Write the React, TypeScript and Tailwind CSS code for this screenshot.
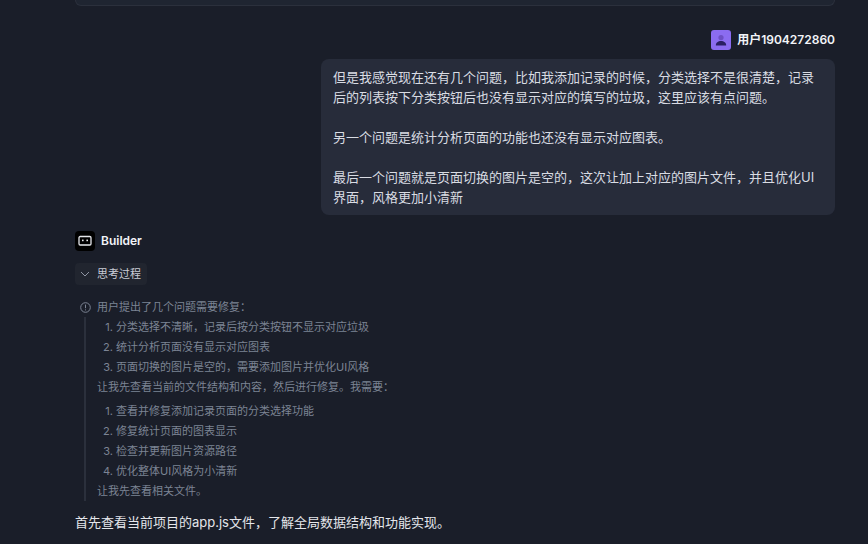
import React from "react";

const font = { };

function Row({ n, t }: { n: number; t: string }) {
  return (
    <div className="h-5 flex text-[11px] leading-5 text-[#7c8494] pl-[5px]">
      <span className="w-[11px] text-right mr-[0px]">{n}.</span>
      <span className="ml-[3px]">{t}</span>
    </div>
  );
}

export default function App() {
  return (
    <div className="w-[868px] h-[544px] overflow-hidden bg-[#1a1e29] font-['Inter','Noto_Sans_CJK_SC',sans-serif] flex flex-col pl-[75px] pr-[33px]">
      <div className="h-[6px] shrink-0 bg-[#1f2531] border border-t-0 border-[#2b303c] rounded-b-md" />
      <div className="mt-6 h-5 shrink-0 flex justify-end items-center gap-[6px]">
        <div className="w-5 h-5 rounded-[3px] bg-[#8b6cf0] flex items-center justify-center">
          <svg width="14" height="14" viewBox="0 0 14 14">
            <circle cx="7" cy="4.6" r="2.6" fill="#6d4fc4" />
            <path d="M1.8 12.5c0-3 2.3-4.6 5.2-4.6s5.2 1.6 5.2 4.6z" fill="#2a1f63" />
          </svg>
        </div>
        <span className="text-[12px] font-semibold text-[#f2f4f8] leading-5">用户1904272860</span>
      </div>
      <div className="mt-[9px] self-end w-[514px] h-[156px] shrink-0 rounded-lg bg-[#272c3a] px-3 pt-[8px] text-[13px] leading-5 text-[#d9dce3]">
        <p>但是我感觉现在还有几个问题，比如我添加记录的时候，分类选择不是很清楚，记录后的列表按下分类按钮后也没有显示对应的填写的垃圾，这里应该有点问题。</p>
        <p className="mt-5">另一个问题是统计分析页面的功能也还没有显示对应图表。</p>
        <p className="mt-5">最后一个问题就是页面切换的图片是空的，这次让加上对应的图片文件，并且优化UI界面，风格更加小清新</p>
      </div>
      <div className="mt-4 h-5 shrink-0 flex items-center gap-[6px]">
        <div className="w-5 h-5 rounded-[4px] bg-black flex items-center justify-center">
          <svg width="14" height="12" viewBox="0 0 14 12" fill="none">
            <rect x="1" y="1.5" width="12" height="8.5" rx="1.2" stroke="#e5e7eb" strokeWidth="1.3" />
            <rect x="4" y="4.6" width="1.6" height="1.6" fill="#e5e7eb" />
            <rect x="8.4" y="4.6" width="1.6" height="1.6" fill="#e5e7eb" />
          </svg>
        </div>
        <span className="text-[12px] font-semibold text-[#f2f4f8] leading-5">Builder</span>
      </div>
      <div className="mt-3 self-start w-[72px] h-[22px] shrink-0 rounded-[4px] bg-[#21252f] flex items-center pl-[5px] gap-[7px]">
        <svg width="10" height="10" viewBox="0 0 10 10" fill="none">
          <path d="M1 3l4 4 4-4" stroke="#8f95a3" strokeWidth="1" />
        </svg>
        <span className="text-[11px] text-[#c9cdd6] leading-5">思考过程</span>
      </div>
      <div className="mt-[12px] h-5 shrink-0 flex items-center pl-[5px] gap-[6px] text-[11px] text-[#7c8494]">
        <svg width="11" height="11" viewBox="0 0 11 11" fill="none">
          <circle cx="5.5" cy="5.5" r="4.8" stroke="#7c8494" strokeWidth="1" />
          <path d="M5.5 2.6v3.6M5.5 7.4v1" stroke="#7c8494" strokeWidth="1" />
        </svg>
        <span className="leading-5">用户提出了几个问题需要修复：</span>
      </div>
      <div className="ml-[9px] shrink-0 border-l-2 border-[#2b303c] pl-[11px] w-[500px]">
        <Row n={1} t="分类选择不清晰，记录后按分类按钮不显示对应垃圾" />
        <Row n={2} t="统计分析页面没有显示对应图表" />
        <Row n={3} t="页面切换的图片是空的，需要添加图片并优化UI风格" />
        <div className="h-5 text-[11px] leading-5 text-[#7c8494]">让我先查看当前的文件结构和内容，然后进行修复。我需要：</div>
        <div className="mt-1" />
        <Row n={1} t="查看并修复添加记录页面的分类选择功能" />
        <Row n={2} t="修复统计页面的图表显示" />
        <Row n={3} t="检查并更新图片资源路径" />
        <Row n={4} t="优化整体UI风格为小清新" />
        <div className="h-5 text-[11px] leading-5 text-[#7c8494]">让我先查看相关文件。</div>
      </div>
      <p className="mt-[11px] text-[13px] leading-5 text-[#e4e6eb] shrink-0">首先查看当前项目的app.js文件，了解全局数据结构和功能实现。</p>
    </div>
  );
}
